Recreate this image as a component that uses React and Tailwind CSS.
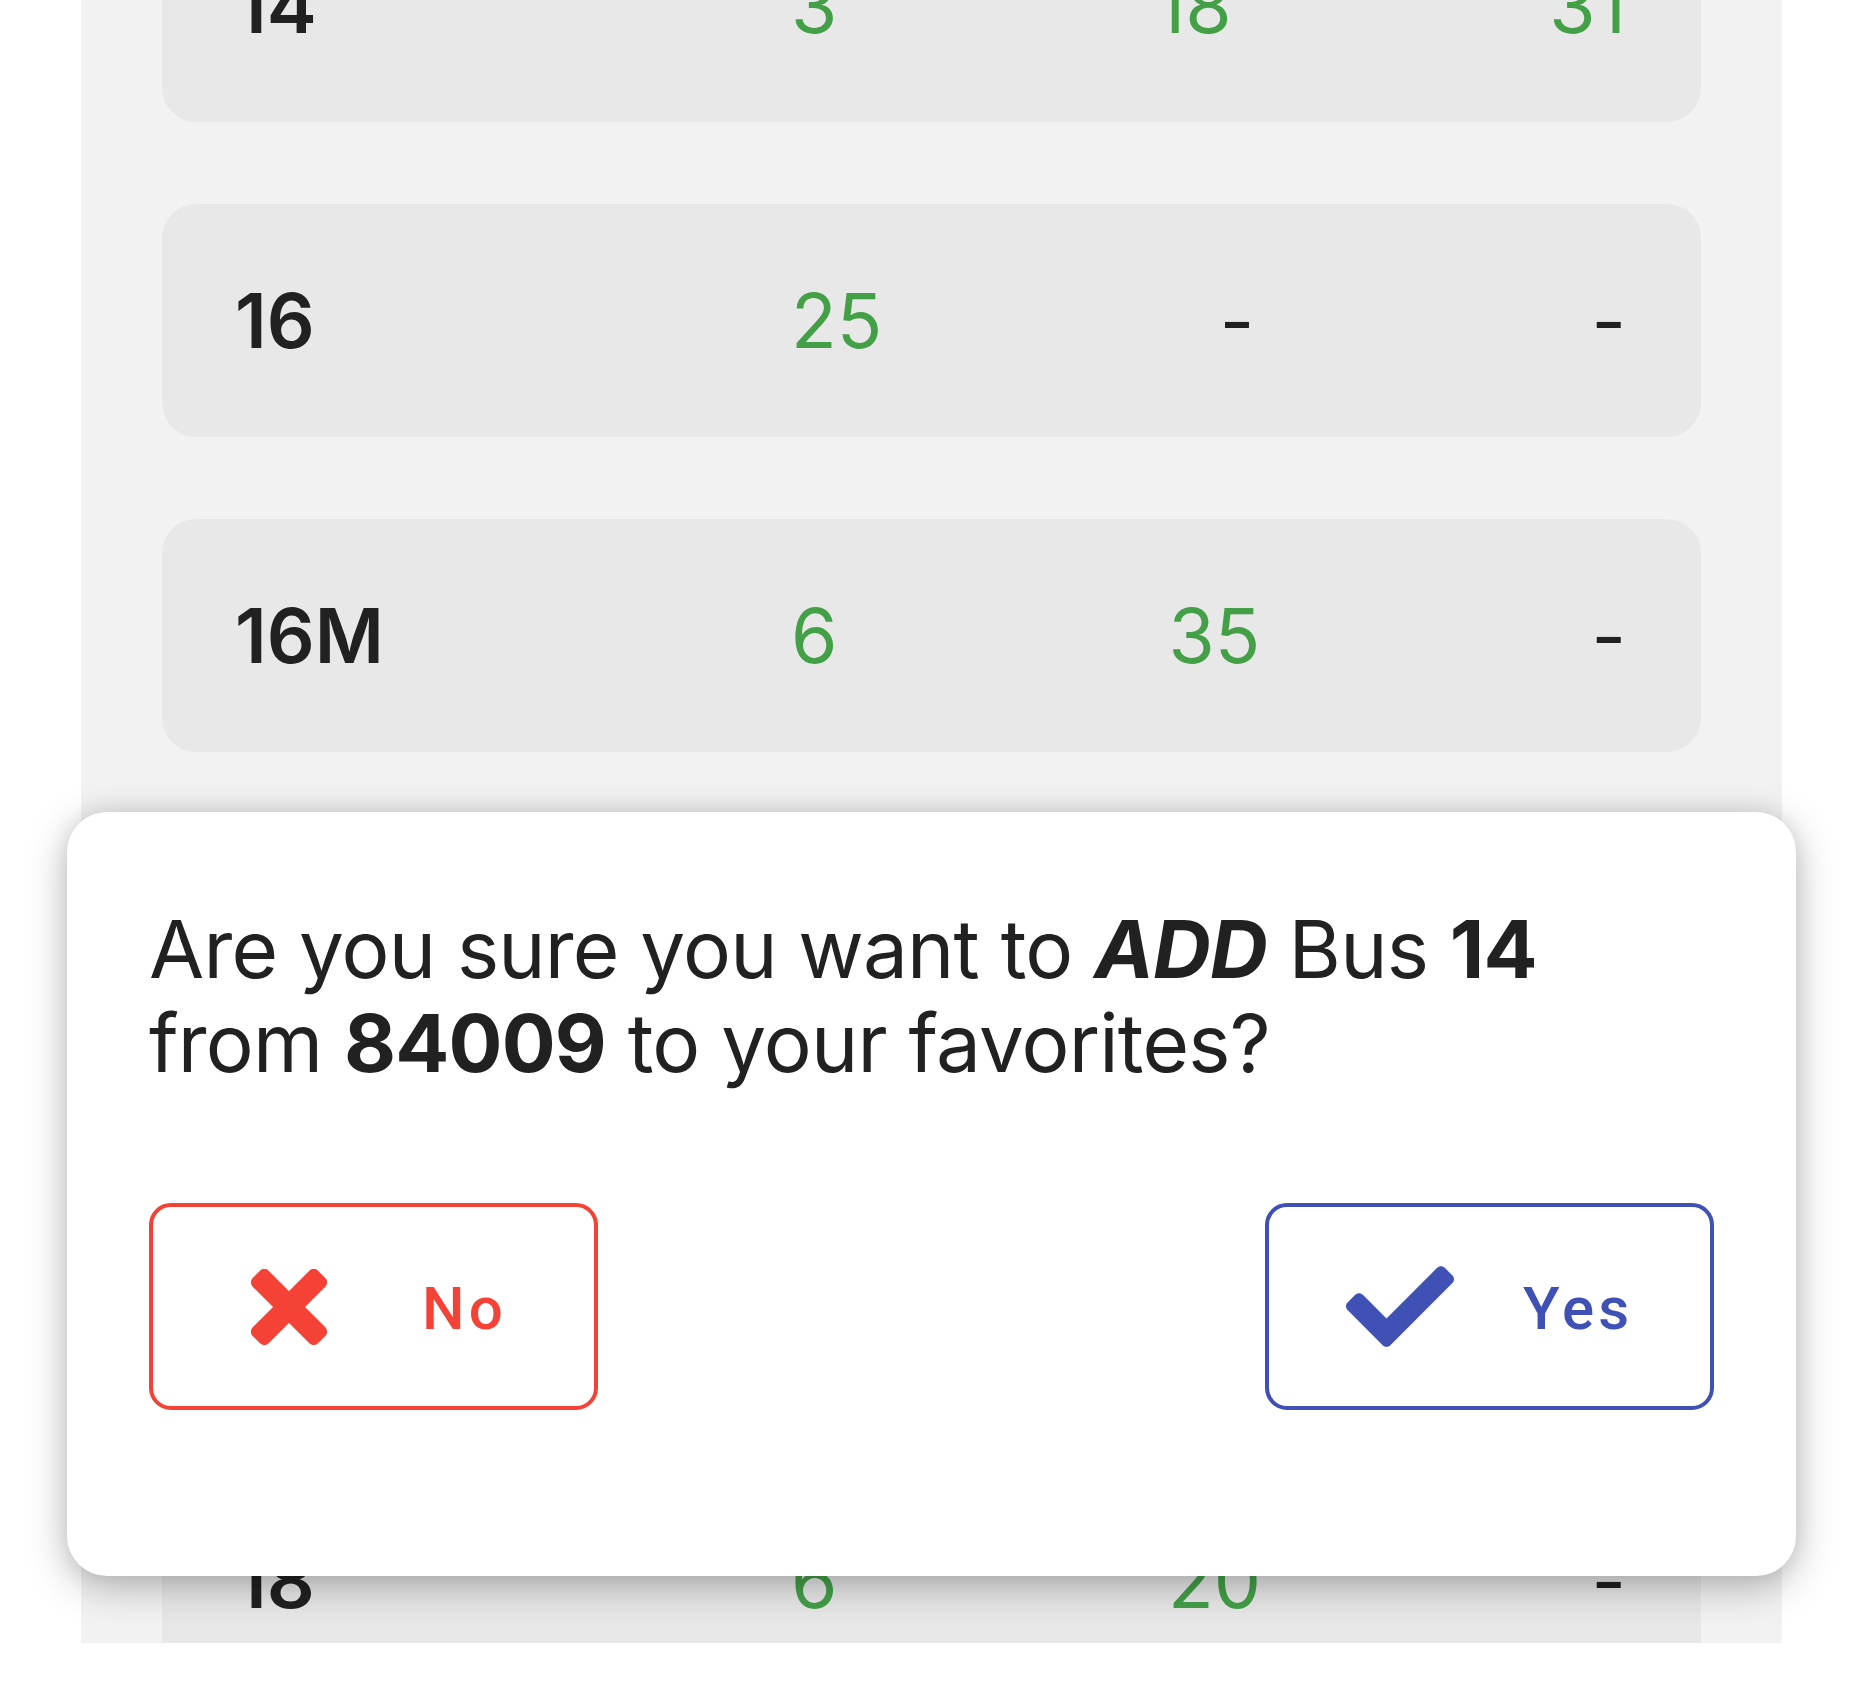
import React from "react";

const rows = [
  { bus: "14", a: "3", b: "18", c: "31" },
  { bus: "16", a: "25", b: "-", c: "-" },
  { bus: "16M", a: "6", b: "35", c: "-" },
  { bus: "", a: "", b: "", c: "" },
  { bus: "", a: "", b: "", c: "" },
  { bus: "18", a: "6", b: "20", c: "-" },
];

function Val({ v }) {
  const dash = v === "-";
  return (
    <span className={dash ? "text-[#212121]" : "text-[#43a047]"}>{v}</span>
  );
}

function XIcon() {
  return (
    <svg width="76" height="76" viewBox="3 3 74 74" className="shrink-0">
      <rect x="-5" y="29" width="90" height="22" rx="6" fill="#f44336" transform="rotate(45 40 40)" />
      <rect x="-5" y="29" width="90" height="22" rx="6" fill="#f44336" transform="rotate(-45 40 40)" />
    </svg>
  );
}

function CheckIcon() {
  return (
    <svg width="108" height="81" viewBox="0 64 512 384" className="shrink-0">
      <path
        fill="#3f51b5"
        d="M173.898 439.404l-166.4-166.4c-9.997-9.997-9.997-26.206 0-36.204l36.203-36.204c9.997-9.998 26.207-9.998 36.204 0L192 312.69 432.095 72.596c9.997-9.997 26.207-9.997 36.204 0l36.203 36.204c9.997 9.997 9.997 26.206 0 36.204l-294.4 294.401c-9.998 9.997-26.207 9.997-36.204-.001z"
      />
    </svg>
  );
}

export default function App() {
  return (
    <div
      className="relative w-full h-[1696px] bg-white overflow-hidden"
      style={{ fontFamily: "Inter, 'Noto Sans', sans-serif" }}
    >
      <div className="mx-[81px] h-[1643px] bg-[#f2f2f2] overflow-hidden px-[81px]">
        <div className="flex flex-col gap-[82px] -mt-[111px]">
          {rows.map((r, i) => (
            <div
              key={i}
              className="h-[233px] shrink-0 rounded-[34px] bg-[#e8e8e8] flex items-center pl-[73px] pr-[75px] text-[75px] leading-none"
            >
              <div className="w-[556px] shrink-0 font-semibold text-[#212121]">{r.bus}</div>
              <div className="flex-1 flex justify-between">
                <Val v={r.a} />
                <Val v={r.b} />
                <Val v={r.c} />
              </div>
            </div>
          ))}
        </div>
      </div>

      <div className="absolute left-[67px] right-[67px] top-[812px] bg-white rounded-[40px] pt-[90px] px-[82px] pb-[166px] shadow-[0_10px_40px_rgba(0,0,0,0.28),0_0_22px_rgba(0,0,0,0.07)]">
        <p className="text-[80px] leading-[94px] tracking-[-0.01em] text-[#212121]">
          Are you sure you want to <b className="font-bold italic">ADD</b> Bus{" "}
          <b className="font-bold">14</b> from <b className="font-bold">84009</b> to your favorites?
        </p>
        <div className="mt-[113px] flex justify-between">
          <button className="w-[449px] h-[207px] border-[4px] border-[#f44336] rounded-[22px] flex items-center justify-start pl-[98px] gap-[95px] bg-white">
            <XIcon />
            <span
              className="mt-[5px] text-[60px] leading-none font-medium tracking-[0.07em] text-[#f44336]"
              style={{ fontFamily: "Roboto, 'Noto Sans', sans-serif" }}
            >
              No
            </span>
          </button>
          <button className="w-[449px] h-[207px] border-[4px] border-[#3f51b5] rounded-[22px] flex items-center justify-start pl-[77px] gap-[69px] bg-white">
            <CheckIcon />
            <span
              className="mt-[5px] text-[60px] leading-none font-medium tracking-[0.07em] text-[#3f51b5]"
              style={{ fontFamily: "Roboto, 'Noto Sans', sans-serif" }}
            >
              Yes
            </span>
          </button>
        </div>
      </div>
    </div>
  );
}
